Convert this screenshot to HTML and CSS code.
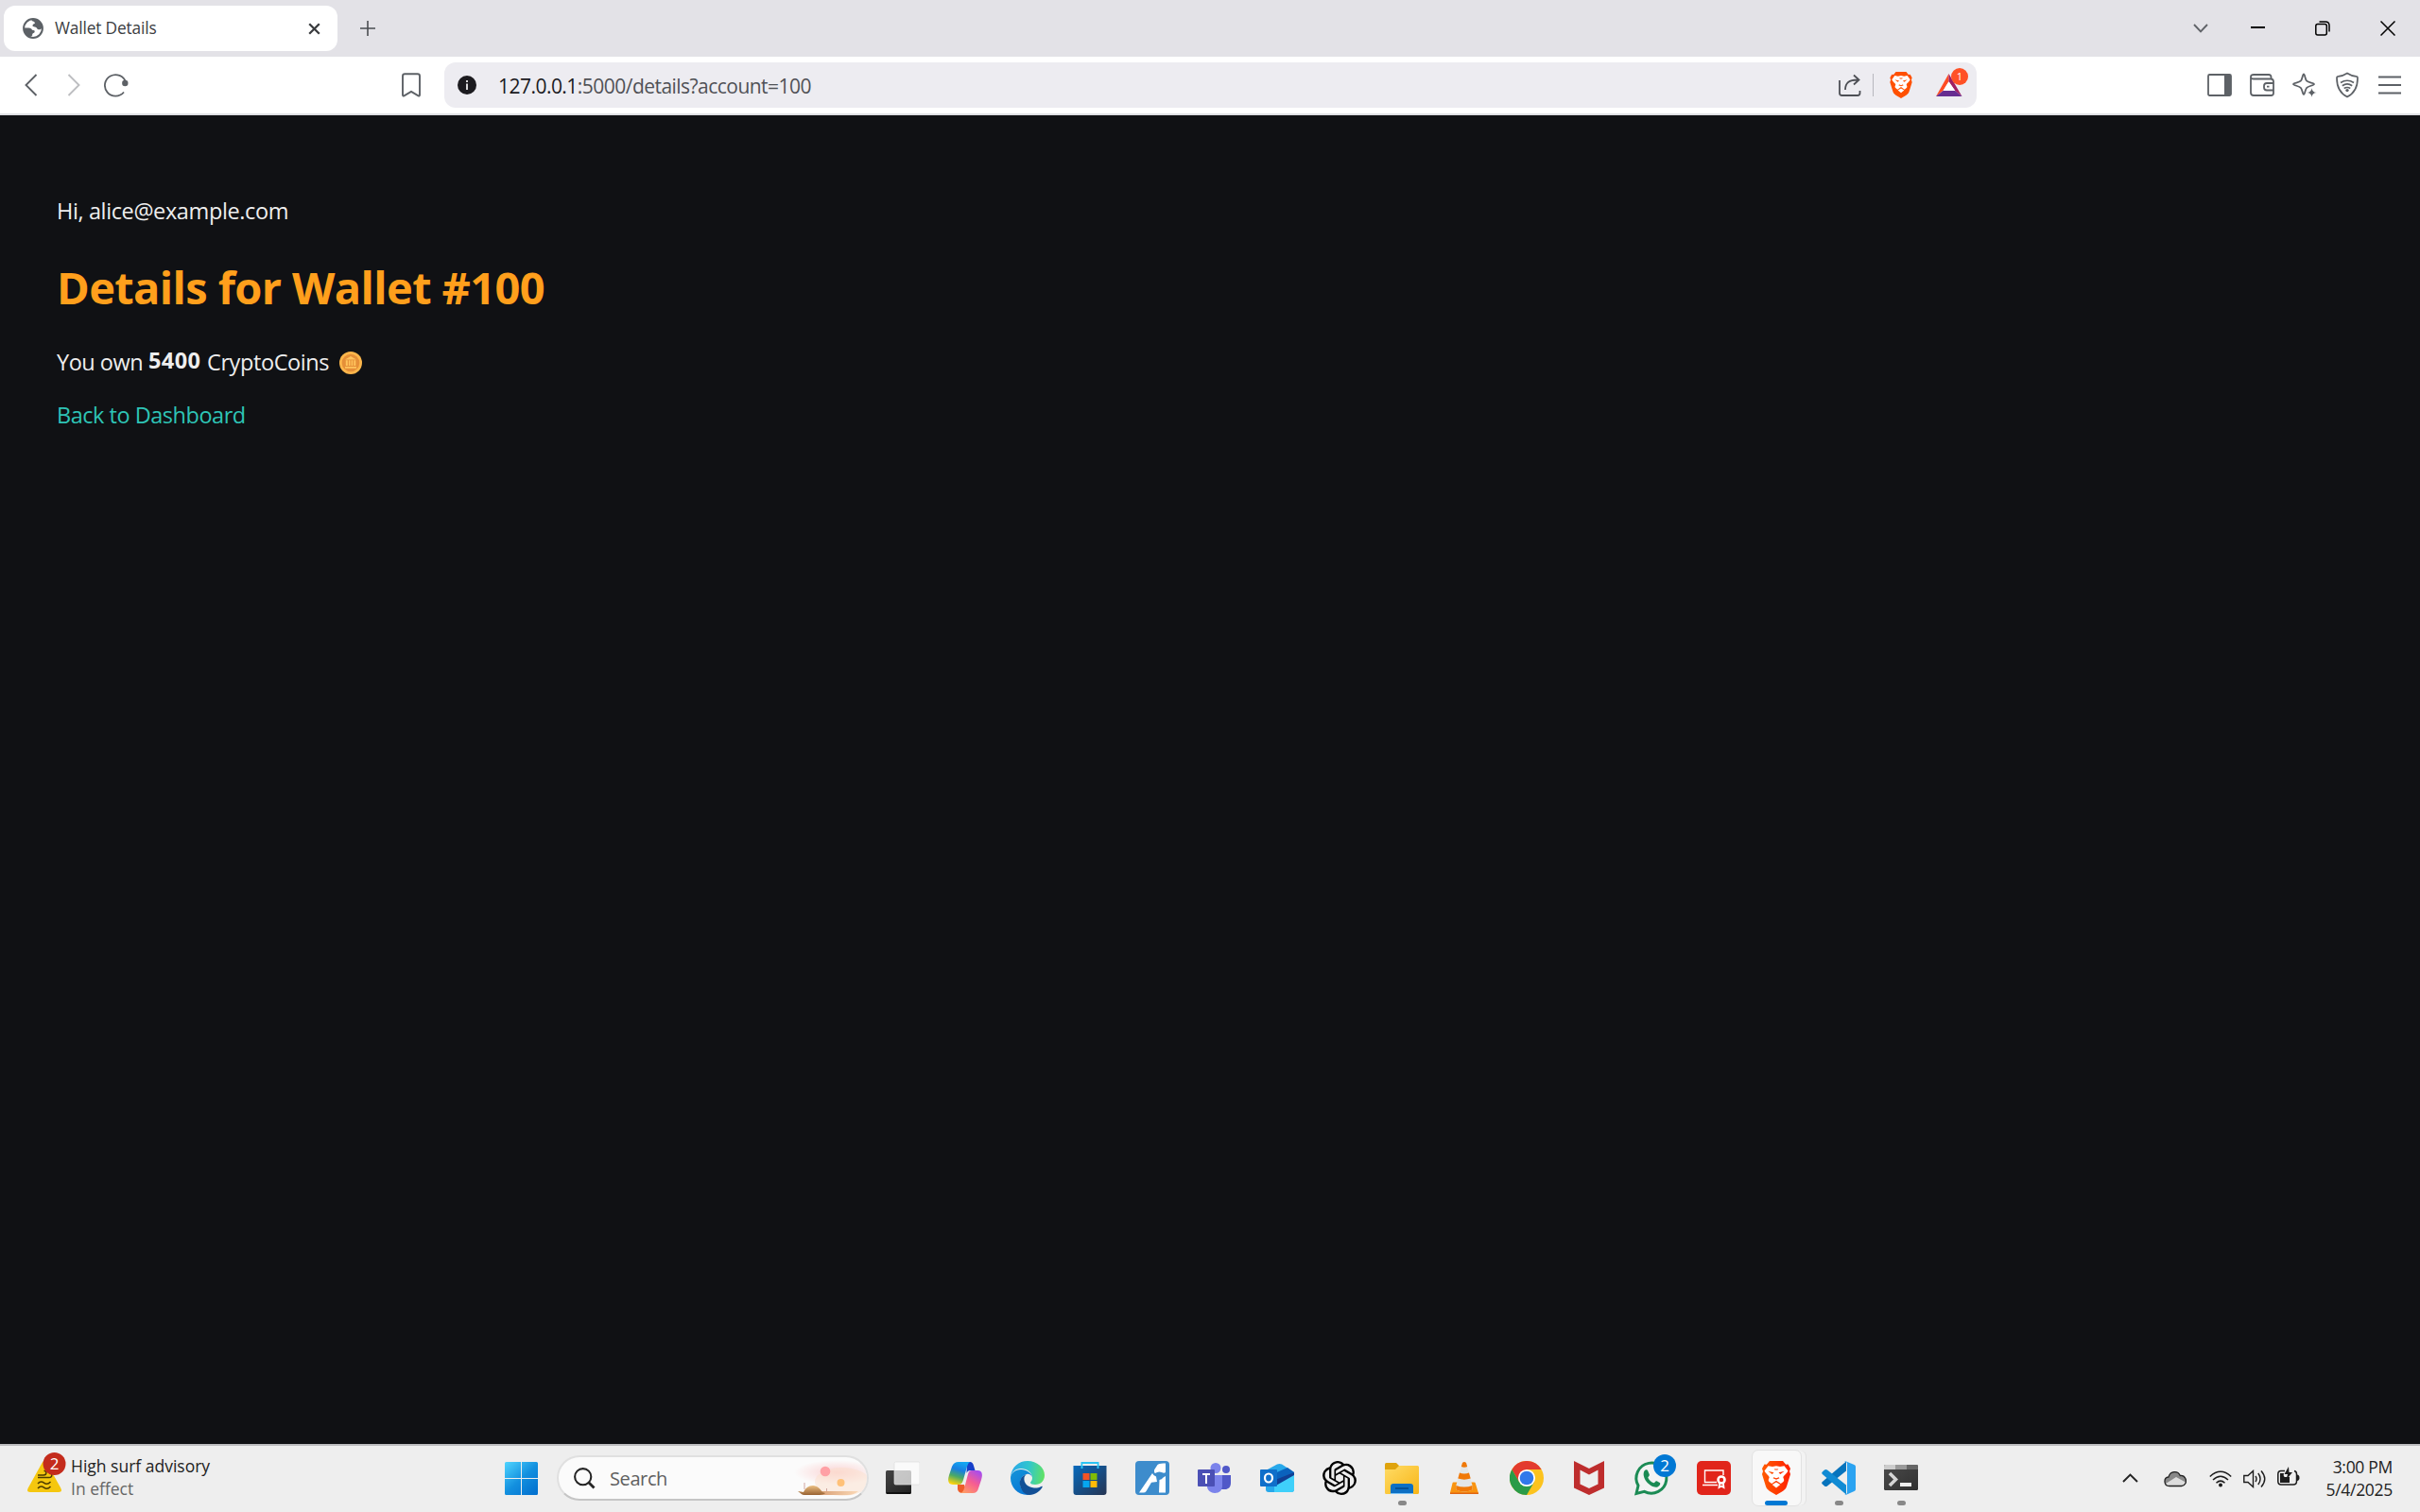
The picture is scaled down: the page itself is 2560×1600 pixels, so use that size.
FILE: index.html
```html
<!DOCTYPE html>
<html lang="en">
<head>
<meta charset="utf-8">
<title>Wallet Details</title>
<link rel="stylesheet" href="styles.css">
</head>
<body>
<svg class="defs" width="0" height="0" aria-hidden="true">
  <defs>
    <linearGradient id="flame" x1="0" x2="1"><stop offset="0" stop-color="#ff5a00"/><stop offset="1" stop-color="#ff2000"/></linearGradient>
    <symbol id="lion" viewBox="0 0 30 36">
      <path d="M8 0h14l3.200 3.700 2.300-.3L30 8l-1 3 1 3-4 13c-1 3-3 4-5 5.500L15 36l-6-3.500C7 31 5 30 4 27L0 14l1-3-1-3 2.500-4.600 2.300.3z"/>
      <path fill="#fff" d="M6.500 5.200 11 6l4-.7 4 .7 4.500-.8L27.500 10.500C26 13.500 22.500 16 22.300 17.200c.5 1.800 1.800 3 .2 4.800l-2.700 2L15 20.700 10.200 24l-2.700-2c-1.600-1.800-.3-3 .2-4.800C7.500 16 4 13.500 2.500 10.500z"/>
      <path fill="#fff" d="m10.700 25 4.300-2.500 4.300 2.500-4.300 3.600z"/>
      <path d="m6.300 10.700 6.200 1.600-1.800 1.600zM23.700 10.700l-6.200 1.600 1.800 1.600zM12.600 8.400h4.800l-1 1.200h-2.800zM12.300 13.500l.5 3.500-1.300 1.200 3.500 1.500 3.500-1.500-1.300-1.200.5-3.500-.6 4-2.100.8-2.100-.8z"/>
    </symbol>
  </defs>
</svg>

<header class="tabstrip">
  <div class="tab">
    <svg class="favicon" width="22" height="22" viewBox="0 0 22 22"><circle cx="11" cy="11" r="9.900" fill="#fff" stroke="#5c6166" stroke-width="2"/><path fill="#5c6166" d="M10 1c6 0 10.500 3 10.900 9.500-1.600 1.800-3.400 2.100-4.900 1.500-1-.5-1-2-2.200-2.300-1.200-.4-2.800.1-3.300-1.100-.4-1.400 1-2.600 2.500-2.900L12.200 4 9.500 3zM1.300 10.500h5.200c1.800 0 3 1 3.500 2.200l2.300.5c.9 1.100.2 2.600-1.100 2.900l-1 .8v1.600l-2 1.400C4.300 19 .8 15.500 1.300 10.500z"/></svg>
    <span class="tab-title">Wallet Details</span>
    <svg class="tab-close" width="13" height="13" viewBox="0 0 13 13"><path d="m1.200 1.200 10.600 10.600M11.800 1.200 1.200 11.800" stroke="#3a3c3f" stroke-width="2.300"/></svg>
  </div>
  <svg class="new-tab" width="16" height="16" viewBox="0 0 16 16"><path d="M8 0v16M0 8h16" stroke="#4b4e52" stroke-width="1.600"/></svg>
  <div class="window-controls">
    <svg width="16" height="10" viewBox="0 0 16 10"><path d="m1 1 7 7.300L15 1" fill="none" stroke="#606368" stroke-width="1.900"/></svg>
    <svg class="min" width="16" height="16" viewBox="0 0 16 16"><path d="M0 7h15" stroke="#000" stroke-width="2"/></svg>
    <svg class="restore" width="16" height="16" viewBox="0 0 16 16"><g fill="none" stroke="#000" stroke-width="1.500"><rect x=".8" y="3.500" width="11.500" height="11.500" rx="2"/><path d="M4.500 1H11c2.500 0 4 1.500 4 4v6.500"/></g></svg>
    <svg class="close" width="16" height="16" viewBox="0 0 16 16"><path d="m.5.500 15 15M15.500.5l-15 15" stroke="#000" stroke-width="1.500"/></svg>
  </div>
</header>

<nav class="toolbar">
  <div class="nav-buttons">
    <svg width="14" height="24" viewBox="0 0 14 24"><path d="M12.500 1 1.500 12l11 11" fill="none" stroke="#5d6166" stroke-width="1.900"/></svg>
    <svg class="forward" width="14" height="24" viewBox="0 0 14 24"><path d="m1.500 1 11 11-11 11" fill="none" stroke="#bdbec1" stroke-width="1.900"/></svg>
    <svg class="reload" width="26" height="26" viewBox="0 0 26 26"><path d="M23 10A11.300 11.300 0 1 0 21 20.500" fill="none" stroke="#5d6166" stroke-width="1.800"/><circle cx="22.300" cy="11" r="3.200" fill="#5d6166"/></svg>
  </div>
  <svg class="bookmark" width="20" height="26" viewBox="0 0 20 26"><path d="M1 3.500Q1 1.200 3.300 1.200h13.400Q19 1.200 19 3.500v20q0 1.500-1.500.8L10 19.900l-7.500 4.400Q1 25 1 23.500z" fill="none" stroke="#5d6166" stroke-width="1.900"/></svg>
  <div class="address">
    <svg width="20" height="20" viewBox="0 0 20 20"><circle cx="10" cy="10" r="10" fill="#1c1b1f"/><path d="M10 8.500V15M10 5v2" stroke="#eee" stroke-width="1.800"/></svg>
    <span class="url"><b>127.0.0.1</b>:5000/details?account=100</span>
    <div class="address-actions">
      <svg width="24" height="24" viewBox="0 0 24 24"><g fill="none" stroke="#4d4f55" stroke-width="1.800"><path d="M1 7v13.500Q1 23 3.500 23H20q2.500 0 2.500-2.500V18M7 17C7 10 11 6.500 20 6.500M16 1.500l5.500 5-5.500 5"/></g></svg>
      <i class="divider"></i>
      <svg class="shields" width="24" height="28" fill="#ff5000"><use href="#lion"/></svg>
      <div class="rewards">
        <svg width="28" height="24" viewBox="0 0 28 24"><path fill="#ff4c24" d="M13.500 0v8.200L7.500 18 0 24z"/><path fill="#9e1f63" d="M13.500 0 27.500 24l-7.300-6-6.700-9.800z"/><path fill="#662d91" d="M0 24h27.500l-7.300-6H7.500z"/><path fill="#fff" d="m13.500 8.200 6.700 9.800H7.500z"/></svg>
        <span class="reward-badge">1</span>
      </div>
    </div>
  </div>
  <div class="toolbar-tools">
    <svg width="26" height="26" viewBox="0 0 26 26"><rect x="1" y="2" width="24" height="22" rx="1.500" fill="none" stroke="#5d6166" stroke-width="1.800"/><path d="M18 2h7v22h-7z" fill="#5d6166"/></svg>
    <svg width="26" height="26" viewBox="0 0 26 26"><g fill="none" stroke="#5d6166" stroke-width="1.800"><path d="M22.500 6V4.500Q22.500 2 20 2H4.200Q1 2 1 4.300t3.200 2.200H22q3 0 3 3v12q0 2.500-2.500 2.500H4Q1 24 1 21V4M25 11h-7q-3 0-3 3v1.500q0 3 3 3h7M18 14.700h2.500"/></g></svg>
    <svg width="26" height="26" viewBox="0 0 26 26"><path d="M12 1.500c1.300 0 1.400 5.500 3.200 7.200 1.800 1.800 7.800 2 7.800 3.300s-6 2-7.800 3.800C13.400 17.600 13.300 23 12 23s-1.400-5.400-3.200-7.200C7 14 1 13.300 1 12s6-1.500 7.800-3.300c1.800-1.700 1.900-7.200 3.200-7.200z" fill="#fff" stroke="#5d6166" stroke-width="1.800"/><path d="M20.500 16q.6 4.400 5 5-4.400.6-5 5-.6-4.400-5-5 4.400-.6 5-5z" fill="#5d6166" stroke="#fff" stroke-width=".4"/></svg>
    <svg width="26" height="28" viewBox="0 0 26 28"><g fill="none" stroke="#5d6166" stroke-width="1.700"><path d="M13 1.500c3 2 6 3 9.500 3.300 1 0 1.500.8 1.500 2 0 9-2.500 15.500-11 19.700C4.500 22.300 2 15.800 2 6.800c0-1.200.5-2 1.500-2C7 4.500 10 3.500 13 1.500z"/><path d="M6 11.500q7-4.500 14 0M7.800 14.700q5.200-3.700 10.400 0M9.700 17.500q3.300-2 6.600 0"/></g><circle cx="13" cy="19.600" r="1.700" fill="#5d6166"/></svg>
    <svg width="26" height="26" viewBox="0 0 26 26"><path d="M1 4.500h24M1 13h24M1 21.500h24" stroke="#5d6166" stroke-width="1.900"/></svg>
  </div>
</nav>

<main class="page">
  <p class="greeting">Hi, alice@example.com</p>
  <h1>Details for Wallet #100</h1>
  <p class="balance"><span class="own">You own</span><strong>5400</strong><span class="coins">CryptoCoins</span>
    <svg width="24" height="24" viewBox="0 0 24 24"><circle cx="12" cy="12" r="12" fill="#fcb64b"/><circle cx="12" cy="12" r="9.300" fill="#e58f38"/><path d="m12 5 6 3.500H6zM6.800 9.300h2V15h-2zM9.900 9.300h1.600V15H9.900zM12.600 9.300h1.600V15h-1.600zM15.300 9.300h2V15h-2zM6 16h12v1.700H6z" fill="#ffc35c"/></svg>
  </p>
  <a class="back" href="#">Back to Dashboard</a>
</main>

<footer class="taskbar">
  <div class="weather">
    <svg width="42" height="44" viewBox="0 0 42 44"><path d="M15.500 11 .8 37.500Q-1.500 42 3 42h30q4.500 0 2.200-4.500L20.500 11q-2.500-4-5 0z" fill="#f5c70f"/><path d="M11 24h6c4 0 3.500-5 .5-4.500M11 26.500h12c4 0 3.500-5 0-4.500M11 33q3-3.500 6.500-.8t7-1.200M11 38q3-3.500 6.500-.8t7-1.200" fill="none" stroke="#4c3c00" stroke-width="1.500"/><circle cx="28.500" cy="12" r="12" fill="#c42b1c"/><text x="28.500" y="18" text-anchor="middle" fill="#fff" font-size="17" font-family="Open Sans, sans-serif">2</text></svg>
    <div class="weather-text"><span class="headline">High surf advisory</span><span class="effect">In effect</span></div>
  </div>
  <svg class="start" width="36" height="36" viewBox="0 0 36 36"><defs><linearGradient id="win" gradientUnits="userSpaceOnUse" x1="0" y1="0" x2="30" y2="34"><stop offset="0" stop-color="#4fd5ff"/><stop offset=".55" stop-color="#1390df"/><stop offset="1" stop-color="#0473d0"/></linearGradient></defs><path fill="url(#win)" d="M1.500 0H17v17H0V1.500Q0 0 1.500 0zM18 0h15.500Q35 0 35 1.500V17H18zM0 18h17v17H1.500Q0 35 0 33.500zM18 18h17v15.500q0 1.500-1.500 1.500H18z"/></svg>
  <div class="search">
    <svg class="magnifier" width="23" height="23" viewBox="0 0 23 23"><circle cx="9.700" cy="9.700" r="8.600" fill="none" stroke="#252525" stroke-width="2.100"/><path d="m15.500 15.500 6 6" stroke="#252525" stroke-width="2.800"/></svg>
    <span>Search</span>
    <svg class="beach" width="78" height="42" viewBox="0 0 78 42"><defs><radialGradient id="glow"><stop offset="0" stop-color="#fbd2d2"/><stop offset="1" stop-color="#fbd2d2" stop-opacity="0"/></radialGradient><linearGradient id="shell" x2="0" y2="1"><stop offset="0" stop-color="#ecc083"/><stop offset="1" stop-color="#986232"/></linearGradient><linearGradient id="sand"><stop offset="0" stop-color="#cf8f63"/><stop offset="1" stop-color="#fbd9b6"/></linearGradient></defs><ellipse cx="46" cy="15" rx="45" ry="13" fill="url(#glow)"/><ellipse cx="52" cy="25" rx="29" ry="15" fill="#fce0cc" opacity=".5"/><circle cx="34" cy="14" r="5.300" fill="#ffa0a5"/><circle cx="50.500" cy="26" r="4" fill="#ffc178"/><path d="M24 35h45q-5 4-11 4H16z" fill="url(#sand)"/><path d="M5 35c3 0 4 1 6 1 2-4 5-7 10-7s8 4 10 7l3 1c-2 2-7 2-11 2H12c-3 0-4-2-7-4z" fill="url(#shell)"/><path d="M12 33v-7M35.500 35v-3" stroke="#d0a6a0"/></svg>
  </div>
  <div class="apps">
    <div class="app"><svg width="36" height="36" viewBox="0 0 36 36"><defs><linearGradient id="dk" x2="1" y2="1"><stop offset="0" stop-color="#444"/><stop offset="1" stop-color="#202020"/></linearGradient></defs><rect y="10" width="27" height="25" rx="1.500" fill="url(#dk)"/><path d="M1 34h25" stroke="#080808" stroke-width="1.500"/><rect x="9" y="1" width="27" height="24" rx="1.500" fill="#fff" fill-opacity=".72" stroke="#ddd" stroke-opacity=".7"/></svg></div>
    <div class="app"><svg width="36" height="36" viewBox="0 0 36 36"><defs><linearGradient id="c1" x1=".6" x2=".3" y2="1"><stop offset="0" stop-color="#12a7f2"/><stop offset=".35" stop-color="#187ee0"/><stop offset=".65" stop-color="#4baa65"/><stop offset="1" stop-color="#ffd40c"/></linearGradient><linearGradient id="c2" x1=".8" x2=".2" y2="1"><stop offset="0" stop-color="#a54cf0"/><stop offset=".5" stop-color="#f65d92"/><stop offset="1" stop-color="#ff9c66"/></linearGradient></defs><path d="M20 1h3q3 0 4 4l1.500 5h-5q-3 0-4 3z" fill="#163fc9"/><path d="M10 25h7l3 9h-5q-4 0-5-4z" fill="#ed5d29"/><path d="M11 1h12q-2 1-3 5l-4 14q-1 5-5 5H5q-7 0-4-10L4 6q2-5 7-5z" fill="url(#c1)"/><path d="M25 10h6q7 0 4 10l-3 9q-1 5-6 5H13q3-1 4-5l4-15q1-4 4-4z" fill="url(#c2)"/></svg></div>
    <div class="app"><svg width="36" height="36" viewBox="0 0 36 36"><defs><linearGradient id="e1" x1="0" y1=".6" x2="1" y2=".7"><stop offset="0" stop-color="#2ba8e9"/><stop offset=".5" stop-color="#31c6cd"/><stop offset="1" stop-color="#62e35f"/></linearGradient><linearGradient id="e2" x2=".6" y2="1"><stop offset="0" stop-color="#1495d8"/><stop offset="1" stop-color="#0876d6"/></linearGradient></defs><path d="M0 17C1 6 9 0 18 0c10 0 18 7 18 15 0 6-4 10-10 10-3 0-5-1-5-2s2-2 2-5C23 12 17 8 11 8 5 8 1 12 0 17z" fill="url(#e1)"/><path d="M0 18c0-5 5-9 11-9s11 4 12 8c-2-3.500-4-3.500-6-3-4 1-7 5-7 9 0 6 4 11 10 12.900C8 37 0 28 0 18z" fill="url(#e2)"/><path d="M17 14c-5 1.500-7.500 6-7.200 10C10.500 31 15 36 20 36c6 0 11-4 13.500-8 .5-1 0-1.500-1-1-2.500 1.300-5 1.700-7.500 1.500-7-.5-11.500-5.500-10.500-11 .3-1.500 1.500-3 2.500-3.500z" fill="#124f96"/></svg></div>
    <div class="app"><svg width="36" height="36" viewBox="0 0 36 36"><defs><linearGradient id="st" x2="1" y2="1"><stop offset="0" stop-color="#0669bc"/><stop offset="1" stop-color="#263452"/></linearGradient></defs><path d="M.5 5h35v28q0 3-3 3h-29q-3 0-3-3z" fill="url(#st)"/><path d="M9.500 8V2h17v6" fill="none" stroke="#2bc4f4" stroke-width="2"/><path d="M10.500 3h15v2h-15z" fill="#eee"/><path fill="#f35325" d="M10.500 13h7v7h-7z"/><path fill="#81bc06" d="M18.500 13h7v7h-7z"/><path fill="#05a6f0" d="M10.500 21h7v7h-7z"/><path fill="#ffba08" d="M18.500 21h7v7h-7z"/></svg></div>
    <div class="app"><svg width="36" height="36" viewBox="0 0 36 36"><rect width="36" height="36" rx="4" fill="#3d8ccc"/><path d="M4 33.500 18 13q1 2.500 4 3.500l1 5.500-6 .8L11.500 32q-1 1.500-3 1.500zM20 9.500 23.500 4q1.500-2 8.500-1.500V12q-1.500 1.300-3.500.3-4-2-7.500.7-1.500-1-1-3.500zM32 16v17.500h-7L25.500 20q2.500-.5 4-2.500z" fill="#fff"/></svg></div>
    <div class="app"><svg width="36" height="36" viewBox="0 0 36 36"><circle cx="30" cy="9" r="4" fill="#5058c8"/><path d="M24 15h11v8c0 5-3 7-6 7h-5z" fill="#5058c8"/><circle cx="19" cy="7.500" r="5.500" fill="#7b83eb"/><path d="M11 15h15v11c0 5-3 8-8 8-4 0-8-3-8-7z" fill="#7b83eb"/><rect y="9" width="18" height="18" rx="1" fill="#4b50b5"/><path d="M5 13h8v2h-3v9H8v-9H5z" fill="#fff"/></svg></div>
    <div class="app"><svg width="36" height="36" viewBox="0 0 36 36"><path d="m6 10 12-6.500q2.500-1 5 0L36 12v18q0 3-3 3H9q-3 0-3-3z" fill="#28a8ea"/><path d="m11 15 18-8 7 5-18 12z" fill="#0a62bd"/><path d="m16 20 20-8v5L16 28z" fill="#103f94"/><path d="m15 27 21-12v15q0 3-3 3H15z" fill="#3fd0fa"/><rect y="9" width="18" height="18" rx="1" fill="#0f6fca"/><ellipse cx="9" cy="18" rx="4" ry="4.500" fill="none" stroke="#fff" stroke-width="2.200"/></svg></div>
    <div class="app"><svg width="36" height="36" viewBox="0 0 24 24"><path d="M22.2819 9.8211a5.9847 5.9847 0 0 0-.5157-4.9108 6.0462 6.0462 0 0 0-6.5098-2.9A6.0651 6.0651 0 0 0 4.9807 4.1818a5.9847 5.9847 0 0 0-3.9977 2.9 6.0462 6.0462 0 0 0 .7427 7.0966 5.98 5.98 0 0 0 .511 4.9107 6.051 6.051 0 0 0 6.5146 2.9001A5.9847 5.9847 0 0 0 13.2599 24a6.0557 6.0557 0 0 0 5.7718-4.2058 5.9894 5.9894 0 0 0 3.9977-2.9001 6.0557 6.0557 0 0 0-.7475-7.0729zm-9.022 12.6081a4.4755 4.4755 0 0 1-2.8764-1.0408l.1419-.0804 4.7783-2.7582a.7948.7948 0 0 0 .3927-.6813v-6.7369l2.02 1.1686a.071.071 0 0 1 .038.052v5.5826a4.504 4.504 0 0 1-4.4945 4.4944zm-9.6607-4.1254a4.4708 4.4708 0 0 1-.5346-3.0137l.142.0852 4.783 2.7582a.7712.7712 0 0 0 .7806 0l5.8428-3.3685v2.3324a.0804.0804 0 0 1-.0332.0615L9.74 19.9502a4.4992 4.4992 0 0 1-6.1408-1.6464zM2.3408 7.8956a4.485 4.485 0 0 1 2.3655-1.9728V11.6a.7664.7664 0 0 0 .3879.6765l5.8144 3.3543-2.0201 1.1685a.0757.0757 0 0 1-.071 0l-4.8303-2.7865A4.504 4.504 0 0 1 2.3408 7.872zm16.5963 3.8558L13.1038 8.364 15.1192 7.2a.0757.0757 0 0 1 .071 0l4.8303 2.7913a4.4944 4.4944 0 0 1-.6765 8.1042v-5.6772a.79.79 0 0 0-.407-.667zm2.0107-3.0231l-.142-.0852-4.7735-2.7818a.7759.7759 0 0 0-.7854 0L9.409 9.2297V6.8974a.0662.0662 0 0 1 .0284-.0615l4.8303-2.7866a4.4992 4.4992 0 0 1 6.6802 4.66zM8.3065 12.863l-2.02-1.1638a.0804.0804 0 0 1-.038-.0567V6.0742a4.4992 4.4992 0 0 1 7.3757-3.4537l-.142.0805L8.704 5.459a.7948.7948 0 0 0-.3927.6813zm1.0976-2.3654l2.602-1.4998 2.6069 1.4998v2.9994l-2.5974 1.4997-2.6067-1.4997Z"/></svg></div>
    <div class="app open"><svg width="36" height="36" viewBox="0 0 36 36"><defs><linearGradient id="fo" x2="1" y2="1"><stop offset="0" stop-color="#ffdc66"/><stop offset="1" stop-color="#f8b517"/></linearGradient></defs><path d="M0 3.500Q0 2 1.500 2H12l3 3v5H0z" fill="#dfa30c"/><path d="M0 9h11l4-4h19.500Q36 5 36 6.500v27q0 1.500-1.500 1.500h-33Q0 35 0 33.500z" fill="url(#fo)"/><path d="M6 34v-7q0-3 3-3h18q3 0 3 3v7z" fill="#0d70c4"/><path d="M11 29h14" stroke="#064f91" stroke-width="1.800"/><path d="M6 34h24v1H6z" fill="#7cc5f7"/></svg></div>
    <div class="app"><svg width="36" height="36" viewBox="0 0 36 36"><path d="M6.500 22.500h22q1 0 1.300 1l3 10q.4 1.500-1 1.500H4q-1.500 0-1-1.500l2.500-10q.2-1 1-1z" fill="#f99410"/><path d="M3 33.500h30V35H3z" fill="#e06612"/><path d="M9.300 26 16 2q2-2 4 0l6.500 24v4.500q-8.600 4-17.200 0z" fill="#e3e6e7"/><path d="M16 2q2-2 4 0l1.200 4q-3.200 1.300-6.400 0zM13 12.500q5 1.800 10 0l1.700 6q-6.700 2.300-13.400 0zM9.300 26q8.600 3 17.200 0v4.500q-8.600 4-17.200 0z" fill="#f07908"/></svg></div>
    <div class="app"><svg width="36" height="36" viewBox="0 0 36 36"><circle cx="18" cy="18" r="18" fill="#fcc31e"/><path d="M18 9h15.600A18 18 0 0 0 2.400 9l7.800 13.500z" fill="#e33b2e"/><path d="M2.400 9A18 18 0 0 0 18 36l7.800-13.500H10.200z" fill="#2a9b48"/><circle cx="18" cy="18" r="9.100" fill="#fff"/><circle cx="18" cy="18" r="7.300" fill="#3079ea"/></svg></div>
    <div class="app"><svg width="36" height="36" viewBox="0 0 36 36"><path d="m2 0 16 8 16-8v28.500L18 36 2 28.500zm6.500 9.500v15L18 29l9.500-4.500v-15L18 14.500z" fill="#be2d2d" fill-rule="evenodd"/></svg></div>
    <div class="app"><svg class="spill" width="36" height="36" viewBox="0 0 36 36"><path d="M2 34.500 4 26a16 16 0 1 1 6.500 6.300z" fill="#f3f3f3" stroke="#1b8b54" stroke-width="3"/><path d="M10.500 10.500c1.500-1.700 3-1.500 3.700 0l1.600 3.700c.3 1.800-1.500 2.500-1.500 3.500 1.500 3 3.500 4.500 6.200 5.500 1 0 1.500-2.200 3.200-1.900l3.400 2c.7 1.200-.6 3.300-2.600 4.200-7 2-18-9.500-14-17z" fill="#1b8b54"/><circle cx="32" cy="5" r="12" fill="#0078d4"/><text x="32" y="11" text-anchor="middle" fill="#fff" font-size="17" font-family="Open Sans, sans-serif">2</text></svg></div>
    <div class="app"><svg width="36" height="36" viewBox="0 0 36 36"><rect width="36" height="36" rx="5" fill="#e1251b"/><g fill="none" stroke="#fff" stroke-width="1.400"><path d="M28 15v-5H8.500v12.500H21M6 25.500h16"/><circle cx="26" cy="20" r="3.500" stroke-width="2.600"/><path d="m24 24-.5 4 2.500-1.500 2.500 1.500-.5-4" stroke-width="1.800"/></g></svg></div>
    <div class="app active"><div class="tile"><svg width="30" height="36" fill="url(#flame)"><use href="#lion"/></svg></div></div>
    <div class="app open"><svg width="36" height="36" viewBox="0 0 36 36"><path d="M26 .5v10L6 26.500q-1.500 1-3 0l-2.200-2q-1.200-1.300 0-2.500z" fill="#0774bd"/><path d="M26 35.500v-10L6 9.500q-1.500-1-3 0l-2.200 2q-1.200 1.300 0 2.500z" fill="#118bd4"/><path d="M26 .5 34.500 4Q36 4.700 36 6v24q0 1.300-1.500 2L26 35.700q-1 .3-2-.7 2.500 1 3-1.500v-31Q26.500 0 24 1q1-1 2-.5z" fill="#2ba3f1"/></svg></div>
    <div class="app open"><svg width="36" height="36" viewBox="0 0 36 36"><defs><linearGradient id="tm" x2="1" y2="1"><stop offset="0" stop-color="#4a4a4a"/><stop offset="1" stop-color="#303030"/></linearGradient></defs><rect y="4" width="36" height="27" rx="1.500" fill="url(#tm)"/><path d="M0 9V5.500Q0 4 1.500 4H12v5z" fill="#ccc"/><path d="M12 4h12v5H12z" fill="#999"/><path d="M24 4h10.500Q36 4 36 5.500V9H24z" fill="#666"/><path d="m6 13 6.500 6.500L6 26" fill="none" stroke="#d5d5d5" stroke-width="3.500"/><path d="M17 23h12v4H17z" fill="#eee"/></svg></div>
  </div>
  <div class="tray">
    <svg class="chev" width="17" height="10" viewBox="0 0 17 10"><path d="m1 9 7.500-7.500L16 9" fill="none" stroke="#222" stroke-width="1.900"/></svg>
    <svg class="cloud" width="24" height="18" viewBox="0 0 24 18"><path d="M6 16.500C-.5 16.500-.5 7.500 5 7 7 0 15 .2 17.300 5.500 23 5 24.500 11 22.700 14q-1.300 2.500-4 2.500z" fill="#888"/><path d="m2 14 11-7 10 5.500c0 2.500-2 4-4.300 4H6q-3 0-4-2.500z" fill="#ddd"/><path d="M6 16.500C-.5 16.500-.5 7.500 5 7 7 0 15 .2 17.300 5.500 23 5 24.500 11 22.700 14q-1.300 2.500-4 2.500z" fill="none" stroke="#222" stroke-width="1.300"/></svg>
    <svg class="wifi" width="24" height="18" viewBox="0 0 24 18"><path d="M.8 6.500q11.200-10.500 22.400 0M4 10q8-7.500 16 0M7.500 13.200q4.500-4.200 9 0" fill="none" stroke="#1c1c1c" stroke-width="1.500"/><circle cx="12" cy="15.500" r="2" fill="#1c1c1c"/></svg>
    <svg class="sound" width="25" height="20" viewBox="0 0 25 20"><path d="M.8 6.500H5l5.500-5v17l-5.500-5H.8zM13 7q2 3 0 6M15.800 4q4.500 6 0 12M19 1.500q7.500 8.500 0 17" fill="none" stroke="#1c1c1c" stroke-width="1.400"/></svg>
    <svg class="battery" width="24" height="22" viewBox="0 0 24 22"><path d="M8 4.500H4Q.8 4.500.8 8v7.500Q.8 19 4 19h13q3.500 0 3.500-3.500V8q0-3-2.500-3.500" fill="none" stroke="#1c1c1c" stroke-width="1.500"/><path d="M21 8.500q2.500.3 2.500 3.200t-2.500 3.200z" fill="#1c1c1c"/><path d="M3 7h4q-1 3 1 4h5v6H3z" fill="#1c1c1c"/><path d="M12 0 7.500 8H11l-1.500 6L16 6h-3.500z" fill="#1c1c1c"/></svg>
    <div class="clock"><span class="time">3:00 PM</span><span class="date">5/4/2025</span></div>
  </div>
</footer>
</body>
</html>
```
FILE: styles.css
```css
* { box-sizing: border-box; }
html, body { margin: 0; height: 100%; }
body {
  display: flex;
  flex-direction: column;
  width: 2560px;
  height: 1600px;
  overflow: hidden;
  background: #101114;
  font-family: "Open Sans", "Noto Sans", sans-serif;
}
svg { display: block; flex: none; }
.defs { position: absolute; }

/* tab strip */
.tabstrip { display: flex; align-items: center; height: 60px; padding-left: 4px; background: #e3e2e7; }
.tab { display: flex; align-items: center; width: 353px; height: 48px; padding: 0 18px 0 20px; border-radius: 12px; background: #fff; }
.tab-title { margin: 0 0 2px 12px; font-size: 17.3px; letter-spacing: -0.15px; color: #3b3d41; white-space: nowrap; }
.tab-close { margin-left: auto; }
.new-tab { margin-left: 24px; }
.window-controls { display: flex; align-items: center; margin-left: auto; padding-right: 26px; }
.min { margin-left: 45px; }
.restore { margin-left: 52px; }
.close { margin-left: 53px; }

/* toolbar */
.toolbar { display: flex; align-items: center; height: 62px; border-bottom: 2px solid #dfe0e4; background: #fff; }
.nav-buttons { display: flex; align-items: center; margin-left: 26px; }
.forward { margin-left: 31px; }
.reload { margin-left: 25px; }
.bookmark { margin-left: 289px; }
.address { display: flex; align-items: center; width: 1621px; height: 48px; margin-left: 25px; padding: 0 15px 0 14px; border-radius: 12px; background: #edecf1; }
.url { margin: 1px 0 0 23px; font-size: 21px; letter-spacing: -0.53px; color: #505156; white-space: nowrap; }
.url b { font-weight: 400; color: #1a1a1e; }
.address-actions { display: flex; align-items: center; margin-left: auto; }
.divider { width: 1px; height: 24px; margin-left: 12px; background: #b7b7bd; }
.shields { margin-left: 17px; }
.rewards { position: relative; margin-left: 25px; }
.reward-badge { position: absolute; left: 16px; top: -6px; width: 18px; height: 18px; border-radius: 9px; background: #ff5126; color: #fff; font-size: 11px; line-height: 18px; text-align: center; }
.toolbar-tools { display: flex; align-items: center; gap: 19px; margin-left: auto; padding-right: 19px; }

/* page */
.page { flex: 1; padding: 84px 60px 0; color: #eee; font-size: 23.500px; line-height: 34px; white-space: nowrap; }
.page p { margin: 0; }
.greeting { letter-spacing: -0.38px; }
h1 { margin: 32px 0 30px; font-size: 47px; line-height: 64px; letter-spacing: -0.62px; color: #ff9f1c; }
.balance { display: flex; }
.own { width: 97px; letter-spacing: -0.5px; }
.balance strong { width: 62px; margin-top: -2px; letter-spacing: 0.4px; }
.coins { width: 140px; letter-spacing: -0.4px; }
.balance svg { margin-top: 6px; }
.back { display: block; margin-top: 22px; color: #2ec4b6; letter-spacing: -0.48px; text-decoration: none; }

/* taskbar */
.taskbar { display: flex; align-items: center; height: 72px; border-top: 2px solid #bdbdc0; background: #eee; white-space: nowrap; }
.weather { display: flex; width: 534px; height: 70px; padding: 7px 0 0 29px; }
.weather-text { display: flex; flex-direction: column; margin: 2px 0 0 4px; font-size: 17.5px; line-height: 24px; }
.headline { color: #222; }
.effect { color: #666; }
.search { display: flex; align-items: center; width: 330px; height: 48px; margin: -2px 0 0 19px; padding-left: 16px; border: 2px solid #e0e0e0; border-bottom-color: #c5c5c5; border-radius: 24px; background: #fbfbfb; overflow: hidden; }
.search span { margin-left: 15px; font-size: 20px; letter-spacing: -0.4px; color: #606060; }
.beach { margin-left: auto; }
.apps { display: flex; margin-left: 3px; }
.app { display: flex; flex-direction: column; align-items: center; width: 66px; height: 70px; padding-top: 16px; }
.app.open::after { content: ""; width: 9px; height: 5px; margin-top: 6px; border-radius: 3px; background: #888; }
.app.active { padding-top: 4px; }
.tile { display: flex; flex-direction: column; align-items: center; width: 53px; height: 60px; padding-top: 11px; border: 1px solid #e2e2e2; border-radius: 7px; background: #f8f8f8; box-shadow: 5px 0 0 -1px #f3f3f3, 6px 0 0 -1px #e2e2e2; }
.tile::after { content: ""; width: 24px; height: 5px; margin-top: 6px; border-radius: 3px; background: #0078d4; }
.spill { overflow: visible; }
.tray { display: flex; align-items: center; margin-left: auto; padding-right: 29px; }
.chev { margin-top: -3px; }
.cloud { margin-left: 27px; }
.wifi { margin-left: 24px; }
.sound { margin-left: 12px; }
.battery { margin-left: 11px; margin-top: -4px; }
.clock { display: flex; flex-direction: column; align-items: flex-end; width: 98px; margin-top: -3px; font-size: 17.500px; line-height: 24px; letter-spacing: -0.3px; color: #222; }
```
